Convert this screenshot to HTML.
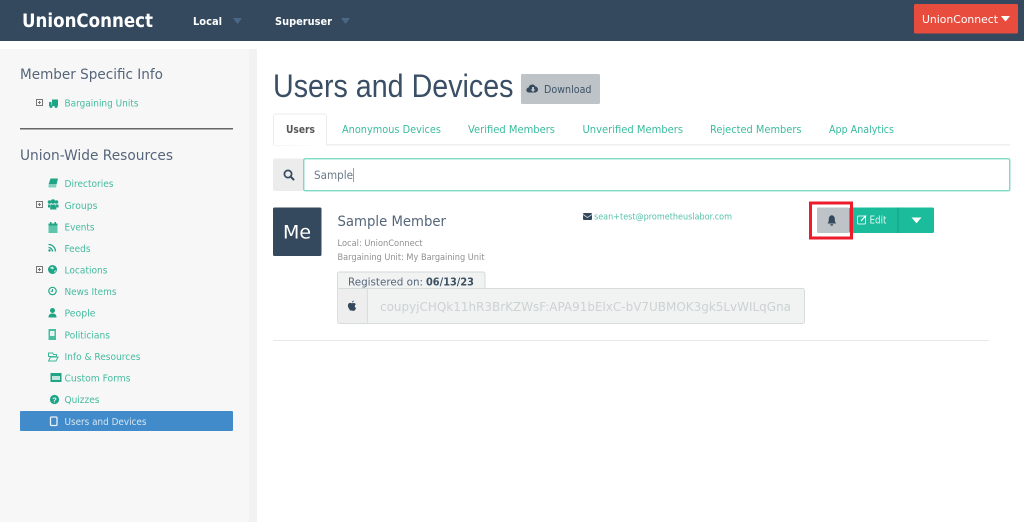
<!DOCTYPE html>
<html><head><meta charset="utf-8"><title>Users and Devices</title>
<style>
html,body{margin:0;padding:0;width:1024px;height:522px;overflow:hidden;background:#fff}
svg{display:block;font-family:"Liberation Sans",sans-serif;filter:blur(.3px)}
.d{font-family:"DejaVu Sans",sans-serif}
.n{fill:#45bb9f;font-size:10px;font-family:"DejaVu Sans",sans-serif}
.i{fill:#1fa586}
.tab{fill:#3bbb9d;font-size:10.500px;font-family:"DejaVu Sans",sans-serif}
</style></head><body>
<svg width="1024" height="522" viewBox="0 0 1024 522" xmlns="http://www.w3.org/2000/svg">
<!-- top bar -->
<rect width="1024" height="41" fill="#34495e"/>
<text class="d" x="22" y="27" fill="#fff" font-size="18.500" font-weight="bold" textLength="131" lengthAdjust="spacingAndGlyphs">UnionConnect</text>
<text class="d" x="193" y="25" fill="#fff" font-size="11" font-weight="bold" textLength="29" lengthAdjust="spacingAndGlyphs">Local</text>
<path d="M233 18h9l-4.500 6z" fill="#4a6785"/>
<text class="d" x="275" y="25" fill="#fff" font-size="11" font-weight="bold" textLength="57" lengthAdjust="spacingAndGlyphs">Superuser</text>
<path d="M341 18h9l-4.500 6z" fill="#4a6785"/>
<rect x="914" y="4" width="104" height="29.500" rx="1.500" fill="#e74c3c"/>
<text class="d" x="922" y="23" fill="#fff" font-size="11" textLength="76" lengthAdjust="spacingAndGlyphs">UnionConnect</text>
<path d="M1001 16h9l-4.500 5.500z" fill="#fff"/>

<!-- sidebar -->
<rect x="0" y="49" width="257" height="473" fill="#f7f7f7"/>
<rect x="249" y="49" width="8" height="473" fill="#f2f2f2"/>
<text class="d" x="20" y="79" fill="#55657a" font-size="14.500" textLength="143" lengthAdjust="spacingAndGlyphs">Member Specific Info</text>
<rect x="20" y="128" width="213" height="1.500" fill="#666"/>
<text class="d" x="20" y="160" fill="#55657a" font-size="14.500" textLength="153" lengthAdjust="spacingAndGlyphs">Union-Wide Resources</text>

<!-- expanders -->
<g fill="none" stroke="#777" stroke-width="1">
<rect x="36.500" y="99.500" width="6" height="6"/><path d="M38 102.500h3M39.500 101v3"/>
<rect x="36.500" y="201.500" width="6" height="6"/><path d="M38 204.500h3M39.500 203v3"/>
<rect x="36.500" y="266.500" width="6" height="6"/><path d="M38 269.500h3M39.500 268v3"/>
</g>

<!-- nav icons -->
<path class="i" d="M52 99.500h6v6.500h-6zM49 102h2.500v4h-2.500z"/><circle class="i" cx="51" cy="106.500" r="1.500"/><circle class="i" cx="56" cy="106.500" r="1.500"/>
<path d="M50.500 178.500h7.500l-1.500 6h-8z" fill="#1fa586"/><path d="M48.500 185h8l-.5 2.500h-7.500z" fill="#7fd0bc"/>
<g class="i"><circle cx="53" cy="201.500" r="2.300"/><circle cx="49.500" cy="202" r="1.800"/><circle cx="56.500" cy="202" r="1.800"/><path d="M51 204.500h4.500l1 5h-6.500zM48 204.500h2.500v3h-2.500zM56 204.500h2.500v3h-2.500z"/></g>
<path d="M48.500 223.500h9v9.500h-9z" fill="#5cc5ac"/><path class="i" d="M48.500 223.500h9v2h-9zM50 222h1.500v2h-1.500zM54.500 222h1.500v2h-1.500z"/>
<g fill="none" stroke="#1fa586" stroke-width="1.300"><path d="M48.500 244.500a7 7 0 0 1 7 7M48.500 247.500a4 4 0 0 1 4 4"/></g><circle class="i" cx="49.500" cy="250.500" r="1.200"/>
<circle class="i" cx="52.500" cy="269.500" r="4.500"/><path d="M50 267.500l3-1 1 2-2 1zM54 271l2-1-1 3z" fill="#c3e8df"/>
<circle cx="52.500" cy="291" r="3.700" fill="none" stroke="#1fa586" stroke-width="1.200"/><path d="M52.500 289v2.300h-1.800" fill="none" stroke="#1fa586"/>
<circle class="i" cx="52.500" cy="310.500" r="2.500"/><path class="i" d="M48.500 317.500c0-3 1.500-4 4-4s4 1 4 4z"/>
<rect x="48.500" y="329" width="7.500" height="11" fill="#49bda2"/><rect x="50" y="331" width="4.500" height="5" fill="#e4f4f0"/>
<path d="M48.500 353h4l1 1.500h3v2h-8zM48.500 361l2-4h7.500l-2 4z" fill="none" stroke="#3cb79a" stroke-width="1"/>
<rect x="50.500" y="373" width="11" height="9" fill="#1fa586"/><rect x="52" y="376" width="8" height="4" fill="#bfe6dc"/>
<circle class="i" cx="54.500" cy="399.500" r="4.600"/><text x="54.500" y="402.500" fill="#f7f7f7" font-size="7.500" font-weight="bold" text-anchor="middle">?</text>

<!-- nav text -->
<text class="n" x="64.500" y="106.500" textLength="74" lengthAdjust="spacingAndGlyphs">Bargaining Units</text>
<text class="n" x="64.500" y="187" textLength="49" lengthAdjust="spacingAndGlyphs">Directories</text>
<text class="n" x="64.500" y="209" textLength="33" lengthAdjust="spacingAndGlyphs">Groups</text>
<text class="n" x="64.500" y="230.500" textLength="30" lengthAdjust="spacingAndGlyphs">Events</text>
<text class="n" x="64.500" y="252" textLength="26" lengthAdjust="spacingAndGlyphs">Feeds</text>
<text class="n" x="64.500" y="273.500" textLength="43" lengthAdjust="spacingAndGlyphs">Locations</text>
<text class="n" x="64.500" y="295" textLength="52" lengthAdjust="spacingAndGlyphs">News Items</text>
<text class="n" x="64.500" y="316.500" textLength="31" lengthAdjust="spacingAndGlyphs">People</text>
<text class="n" x="64.500" y="338.500" textLength="45.500" lengthAdjust="spacingAndGlyphs">Politicians</text>
<text class="n" x="64.500" y="360" textLength="76" lengthAdjust="spacingAndGlyphs">Info &amp; Resources</text>
<text class="n" x="64.500" y="381.500" textLength="66" lengthAdjust="spacingAndGlyphs">Custom Forms</text>
<text class="n" x="64.500" y="403" textLength="35" lengthAdjust="spacingAndGlyphs">Quizzes</text>
<rect x="20" y="411" width="213" height="20" rx="1" fill="#428bca"/>
<rect x="50.500" y="417" width="6.500" height="8.500" rx="1" fill="none" stroke="#e8f1f8" stroke-width="1.300"/>
<text class="d" x="64.500" y="425" fill="#d7e6f3" font-size="10" textLength="82" lengthAdjust="spacingAndGlyphs">Users and Devices</text>

<!-- heading -->
<text x="273" y="97" fill="#3a4f65" font-size="32" textLength="240.500" lengthAdjust="spacingAndGlyphs">Users and Devices</text>
<rect x="521" y="74" width="79" height="30" rx="1.500" fill="#bdc3c7"/>
<path d="M529 92.500a2.500 2.500 0 0 1-.3-5 3.500 3.500 0 0 1 6.600-1 2.900 2.900 0 0 1 2.700 3 3 3 0 0 1-2.800 3z" fill="#34495e"/>
<path d="M532 87h2v2.500h1.500l-2.500 2.500-2.500-2.500h1.500z" fill="#bdc3c7"/>
<text class="d" x="544" y="93" fill="#3f5368" font-size="11" textLength="47.500" lengthAdjust="spacingAndGlyphs">Download</text>

<!-- tabs -->
<rect x="273" y="144.200" width="737" height="1.300" fill="#ececec"/>
<path d="M273.500 145V116a2 2 0 0 1 2-2h49a2 2 0 0 1 2 2v29.500" fill="#fff" stroke="#ececec"/>
<text class="d" x="286" y="133" fill="#555" font-size="10.500" font-weight="bold" textLength="29" lengthAdjust="spacingAndGlyphs">Users</text>
<text class="tab" x="342" y="133" textLength="99" lengthAdjust="spacingAndGlyphs">Anonymous Devices</text>
<text class="tab" x="468" y="133" textLength="87" lengthAdjust="spacingAndGlyphs">Verified Members</text>
<text class="tab" x="582.500" y="133" textLength="100.500" lengthAdjust="spacingAndGlyphs">Unverified Members</text>
<text class="tab" x="710" y="133" textLength="91.500" lengthAdjust="spacingAndGlyphs">Rejected Members</text>
<text class="tab" x="829" y="133" textLength="65" lengthAdjust="spacingAndGlyphs">App Analytics</text>

<!-- search -->
<rect x="273" y="158.500" width="31" height="32.500" rx="2" fill="#ececec"/>
<circle cx="288" cy="174" r="3.600" fill="none" stroke="#34495e" stroke-width="1.700"/><path d="M290.500 176.500l3 3" stroke="#34495e" stroke-width="2" stroke-linecap="round"/>
<rect x="303.750" y="158.750" width="706" height="32" rx="1.500" fill="#fff" stroke="#6fd8c0" stroke-width="1.300"/>
<text class="d" x="314" y="179" fill="#6a7a8a" font-size="11.500" textLength="39" lengthAdjust="spacingAndGlyphs">Sample</text>
<rect x="353" y="168" width=".8" height="14" fill="#788"/>

<!-- member -->
<rect x="273" y="207.500" width="48.500" height="48.500" rx="1.500" fill="#34495e"/>
<text class="d" x="283" y="238.500" fill="#fff" font-size="19" textLength="28" lengthAdjust="spacingAndGlyphs">Me</text>
<text class="d" x="337.500" y="226" fill="#55657a" font-size="14.500" textLength="108.500" lengthAdjust="spacingAndGlyphs">Sample Member</text>
<text class="d" x="337.500" y="246" fill="#8f8f8f" font-size="8.500" textLength="85" lengthAdjust="spacingAndGlyphs">Local: UnionConnect</text>
<text class="d" x="337.500" y="260" fill="#8f8f8f" font-size="8.500" textLength="147" lengthAdjust="spacingAndGlyphs">Bargaining Unit: My Bargaining Unit</text>

<path d="M337.500 289v-15a2 2 0 0 1 2-2h143.500a2 2 0 0 1 2 2v15z" fill="#f1f3f3" stroke="#d3dada"/>
<text class="d" x="348" y="285.500" fill="#55657a" font-size="11" textLength="75" lengthAdjust="spacingAndGlyphs">Registered on:</text>
<text class="d" x="426" y="285.500" fill="#3d4f62" font-size="11" font-weight="bold" textLength="48" lengthAdjust="spacingAndGlyphs">06/13/23</text>

<rect x="337.500" y="288.500" width="467" height="35" rx="2" fill="#f1f3f3" stroke="#d6dcdc"/>
<rect x="337.800" y="289" width="29" height="34" rx="2" fill="#eeeeee"/>
<rect x="366.800" y="289" width="1.200" height="34" fill="#d6e0de"/>
<g transform="translate(0 5.500)"><path d="M349 303c-1.200-1.200-1.500-3.800-.3-5 1-1 2-.6 3-.2.700.2 1.500-.7 3-.1.500.2 1 .6 1.200 1-1.500 1-1.500 3 .2 3.800-.4 1.100-1 2.300-1.900 2.800-1 .400-1.500-.3-2.500-.3s-1.700.8-2.700-2z" fill="#34495e"/><path d="M352 297c0-1 .7-1.800 1.800-2 0 1-.7 1.900-1.800 2z" fill="#34495e"/></g>
<text class="d" x="380" y="311" fill="#cbd2d2" font-size="12.500" textLength="411" lengthAdjust="spacingAndGlyphs">coupyjCHQk11hR3BrKZWsF:APA91bElxC-bV7UBMOK3gk5LvWILqGna</text>

<!-- email -->
<rect x="583" y="213" width="9" height="7" rx="1" fill="#34495e"/><path d="M583 214.500l4.500 3 4.500-3" fill="none" stroke="#fff" stroke-width=".7"/>
<text class="d" x="594" y="219.500" fill="#55bfa8" font-size="9" textLength="138" lengthAdjust="spacingAndGlyphs">sean+test@prometheuslabor.com</text>

<!-- actions -->
<rect x="849" y="207.500" width="85" height="25.500" rx="1.500" fill="#1abc9c"/>
<rect x="897.500" y="207.500" width="1" height="25.500" fill="#16a085"/>
<rect x="817" y="207.500" width="32" height="25.500" rx="1" fill="#bdc3c7"/>
<path d="M827.500 223.500c1-1 1.300-2.200 1.300-4.200 0-2.300 1-3.700 3-4 2 .3 3 1.700 3 4 0 2 .3 3.200 1.300 4.200z" fill="#34495e"/><path d="M830.200 224.200h3a1.500 1.500 0 0 1-3 0z" fill="#34495e"/>
<rect x="810.500" y="203" width="41" height="35" fill="none" stroke="#ec1c2d" stroke-width="3"/>
<rect x="857.500" y="216" width="8" height="8" rx="1" fill="none" stroke="#d5f3ec" stroke-width="1"/><path d="M861 221l5-5.500" stroke="#fff" stroke-width="1.300"/>
<text class="d" x="869.500" y="223.500" fill="#dff7f1" font-size="10.500" textLength="17" lengthAdjust="spacingAndGlyphs">Edit</text>
<path d="M911.500 217.500h10l-5 5.700z" fill="#fff"/>

<rect x="273" y="340" width="716" height="1" fill="#e6e8e8"/>
</svg>
</body></html>
